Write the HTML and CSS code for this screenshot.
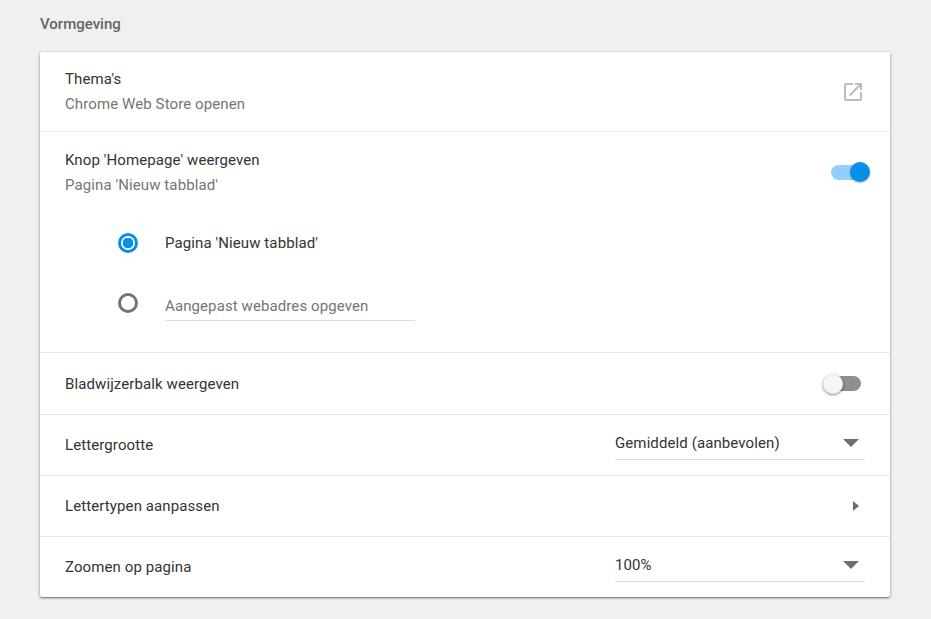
FILE: index.html
```html
<!DOCTYPE html>
<html lang="nl">
<head>
<meta charset="utf-8">
<title>Vormgeving</title>
<link rel="stylesheet" href="styles.css">
</head>
<body>
<h2 class="section-title">Vormgeving</h2>
<section class="card">
  <div class="row row-themes">
    <div class="labels">
      <div class="label">Thema's</div>
      <div class="sub">Chrome Web Store openen</div>
    </div>
    <svg class="ext-icon" width="24" height="24" viewBox="0 0 24 24" aria-hidden="true"><path d="M19 19H5V5h7V3H5a2 2 0 0 0-2 2v14a2 2 0 0 0 2 2h14a2 2 0 0 0 2-2v-7h-2v7zM14 3v2h3.59l-9.83 9.83 1.41 1.41L19 6.41V10h2V3h-7z"/></svg>
  </div>
  <div class="home-block">
    <div class="row row-home">
      <div class="labels">
        <div class="label">Knop 'Homepage' weergeven</div>
        <div class="sub">Pagina 'Nieuw tabblad'</div>
      </div>
      <span class="toggle on"><span class="knob"></span></span>
    </div>
    <div class="radio-row radio-first">
      <span class="radio checked"></span>
      <span class="radio-label">Pagina 'Nieuw tabblad'</span>
    </div>
    <div class="radio-row radio-second">
      <span class="radio"></span>
      <span class="url-input">Aangepast webadres opgeven</span>
    </div>
  </div>
  <div class="row row-bar">
    <div class="label">Bladwijzerbalk weergeven</div>
    <span class="toggle off"><span class="knob"></span></span>
  </div>
  <div class="row row-font">
    <div class="label">Lettergrootte</div>
    <div class="select"><span>Gemiddeld (aanbevolen)</span><span class="caret"></span></div>
  </div>
  <div class="row row-fonts">
    <div class="label">Lettertypen aanpassen</div>
    <span class="arrow"></span>
  </div>
  <div class="row row-zoom">
    <div class="label">Zoomen op pagina</div>
    <div class="select"><span>100%</span><span class="caret"></span></div>
  </div>
</section>
</body>
</html>
```
FILE: styles.css
```css
* { box-sizing: border-box; }
html, body { height: 100%; }
body {
  margin: 0;
  padding: 0 41px 0 40px;
  background: #f0f0f0;
  font-family: Roboto, "Liberation Sans", sans-serif;
  font-size: 15px;
  color: #333;
  overflow: hidden;
}
.section-title {
  margin: 0;
  height: 52px;
  padding-top: 15px;
  font-size: 15px;
  line-height: 18px;
  font-weight: 500;
  color: #646464;
}
.card {
  background: #fff;
  border-radius: 2px;
  height: 545px;
  box-shadow: 0 1px 3px rgba(0,0,0,.45), 0 1px 1px rgba(0,0,0,.2);
  display: flex;
  flex-direction: column;
}
.row {
  display: flex;
  align-items: center;
  justify-content: space-between;
  padding: 0 25px;
}
.row-themes { height: 80px; border-bottom: 1px solid #efefef; }
.home-block { height: 221px; border-bottom: 1px solid #e8e8e8; }
.row-home { height: 80px; }
.row-bar { height: 62px; border-bottom: 1px solid #e8e8e8; }
.row-font { height: 61px; border-bottom: 1px solid #e8e8e8; }
.row-fonts { height: 61px; border-bottom: 1px solid #e8e8e8; }
.row-zoom { flex: 1; }
.label { line-height: 20px; letter-spacing: .1px; color: #333; }
.labels { display: flex; flex-direction: column; gap: 5px; }
.sub { line-height: 20px; letter-spacing: .1px; color: #757575; }
.ext-icon { fill: #bdbdbd; margin-right: 0; margin-top: 0; }
.toggle {
  position: relative;
  display: block;
  width: 34px;
  height: 15px;
  border-radius: 8px;
}
.toggle.on { background: #90d0fa; margin-right: 0; }
.toggle.off { background: #8f8f8f; width: 34px; margin-right: 4px; }
.knob {
  position: absolute;
  top: -2.5px;
  width: 20px;
  height: 20px;
  border-radius: 50%;
}
.on .knob { right: -5px; background: #078fee; box-shadow: 0 1px 2px rgba(0,0,0,.3); }
.off .knob { left: -4px; background: #f5f5f5; box-shadow: 0 1px 3px rgba(0,0,0,.5); }
.radio-row { display: flex; align-items: center; padding-left: 78px; }
.radio-first { height: 20px; margin-top: 21px; }
.radio-second { height: 20px; margin-top: 40px; }
.radio {
  width: 20px;
  height: 20px;
  border-radius: 50%;
  border: 3px solid #757575;
  flex: none;
  background: #fff;
}
.radio.checked {
  border-color: #078fee;
  background: radial-gradient(circle, #078fee 0 5px, #fff 5.5px);
}
.radio-label { margin-left: 27px; letter-spacing: .1px; color: #333; }
.url-input {
  margin-left: 27px;
  width: 250px;
  height: 28px;
  line-height: 26px;
  margin-top: 8px;
  color: #757575;
  letter-spacing: .1px;
  border-bottom: 1px solid #dcdcdc;
}
.select {
  width: 250px;
  height: 32px;
  display: flex;
  align-items: center;
  justify-content: space-between;
  padding-right: 6px;
  border-bottom: 1px solid #dcdcdc;
  letter-spacing: .1px;
  color: #333;
  line-height: 28px;
}
.row-font .select { margin-top: -3px; }
.row-zoom .select { margin-top: -3px; }
.caret {
  width: 0;
  height: 0;
  border-left: 8px solid transparent;
  border-right: 8px solid transparent;
  border-top: 8px solid #6e6e6e;
}
.arrow {
  width: 0;
  height: 0;
  margin-right: 6px;
  border-top: 5.5px solid transparent;
  border-bottom: 5.5px solid transparent;
  border-left: 6px solid #6e6e6e;
}
```
